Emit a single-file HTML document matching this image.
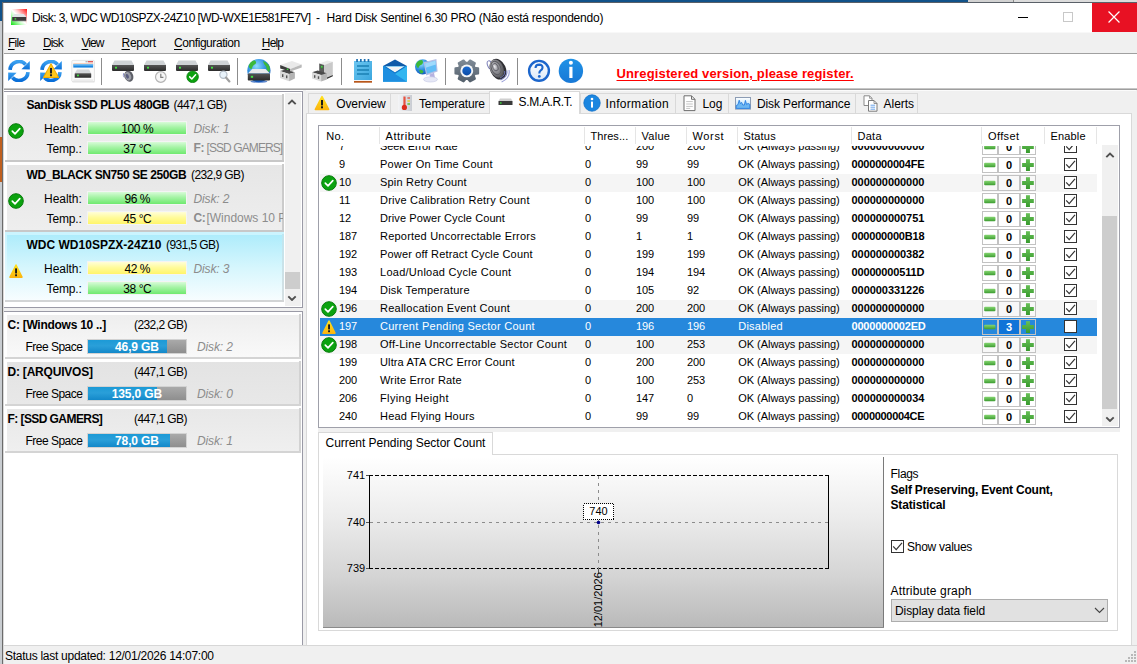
<!DOCTYPE html>
<html><head><meta charset="utf-8"><title>Hard Disk Sentinel</title>
<style>
html,body{margin:0;padding:0;}
body{width:1137px;height:664px;overflow:hidden;position:relative;background:#fff;font-family:"Liberation Sans", sans-serif;}
#root{position:absolute;left:0;top:0;width:1137px;height:664px;overflow:hidden;}
#root div,#root svg,#root span.t{position:absolute;box-sizing:border-box;}
span.t{white-space:pre;line-height:16px;font-size:12px;color:#000;}
u{text-decoration:underline;text-underline-offset:1.5px;text-decoration-thickness:1px;}
</style></head><body><div id="root">
<div style="left:0px;top:0px;width:1137px;height:664px;background:#fff;"></div>
<div style="left:0px;top:0px;width:968px;height:3px;background:#115289;"></div>
<div style="left:968px;top:0px;width:46px;height:3px;background:#d2d2d2;"></div>
<div style="left:1014px;top:0px;width:123px;height:3px;background:#dcdcdc;"></div>
<div style="left:1013px;top:0px;width:1px;height:3px;background:#8a8a8a;"></div>
<div style="left:0px;top:0px;width:3px;height:21px;background:#115289;"></div>
<div style="left:0px;top:21px;width:3px;height:116px;background:#c9cdd1;"></div>
<div style="left:0px;top:137px;width:3px;height:45px;background:#c0601f;"></div>
<div style="left:0px;top:182px;width:3px;height:482px;background:#c9cdd1;"></div>
<div style="left:2px;top:2px;width:1135px;height:1px;background:#5a6068;"></div>
<div style="left:2px;top:2px;width:1px;height:662px;background:#6b6b6b;"></div>
<div style="left:3px;top:3px;width:1px;height:661px;background:#d9d9d9;"></div>
<div style="left:4px;top:3px;width:1133px;height:29px;background:#fff;"></div>
<span class="t" style="left:32.1px;top:9.8px;font-size:12px;letter-spacing:-0.57px;">Disk: 3, WDC WD10SPZX-24Z10 [WD-WXE1E581FE7V]</span>
<span class="t" style="left:316.0px;top:9.8px;font-size:12px;">-</span>
<span class="t" style="left:326.5px;top:9.8px;font-size:12px;letter-spacing:-0.23px;">Hard Disk Sentinel 6.30 PRO (Não está respondendo)</span>
<div style="left:1018px;top:17px;width:10px;height:1px;background:#000;"></div>
<div style="left:1063px;top:12px;width:10px;height:10px;border:1px solid #c8c8c8;"></div>
<div style="left:1092px;top:3px;width:45px;height:29px;background:#e81123;"></div>
<svg style="left:1108px;top:11px;" width="12" height="12" viewBox="0 0 11 11"><path d="M0.5 0.5 L10.5 10.5 M10.5 0.5 L0.5 10.5" stroke="#fff" stroke-width="1.1" fill="none"/></svg>
<div style="left:4px;top:32px;width:1133px;height:21px;background:#f0f0f0;"></div>
<div style="left:4px;top:32px;width:1088px;height:1px;background:#f8f8f8;"></div>
<span class="t" style="left:8.0px;top:34.8px;font-size:12px;letter-spacing:-0.76px;"><u>F</u>ile</span>
<span class="t" style="left:43.0px;top:34.8px;font-size:12px;letter-spacing:-0.89px;"><u>D</u>isk</span>
<span class="t" style="left:81.5px;top:34.8px;font-size:12px;letter-spacing:-1.0px;"><u>V</u>iew</span>
<span class="t" style="left:121.5px;top:34.8px;font-size:12px;letter-spacing:-0.29px;"><u>R</u>eport</span>
<span class="t" style="left:174.0px;top:34.8px;font-size:12px;letter-spacing:-0.43px;"><u>C</u>onfiguration</span>
<span class="t" style="left:261.8px;top:34.8px;font-size:12px;letter-spacing:-0.85px;"><u>H</u>elp</span>
<div style="left:4px;top:53px;width:1133px;height:1px;background:#a0a0a0;"></div>
<div style="left:4px;top:54px;width:1133px;height:34px;background:#fff;"></div>
<div style="left:4px;top:88px;width:1133px;height:1px;background:#c6c6c6;"></div>
<div style="left:4px;top:89px;width:1133px;height:1px;background:#9e9e9e;"></div>
<div style="left:303px;top:90px;width:834px;height:23px;background:#f0f0f0;"></div>
<div style="left:303px;top:90px;width:833px;height:1px;background:#fbfbfb;"></div>
<div style="left:303px;top:90px;width:3px;height:555px;background:#f0f0f0;"></div>
<div style="left:101px;top:58px;width:1px;height:27px;background:#8c8c8c;"></div>
<div style="left:237px;top:58px;width:1px;height:27px;background:#8c8c8c;"></div>
<div style="left:341px;top:58px;width:1px;height:27px;background:#8c8c8c;"></div>
<div style="left:445px;top:58px;width:1px;height:27px;background:#8c8c8c;"></div>
<div style="left:517px;top:58px;width:1px;height:27px;background:#8c8c8c;"></div>
<span class="t" style="left:616.5px;top:65.5px;font-size:13px;font-weight:700;color:#ff0000;letter-spacing:0.14px;text-decoration:underline;text-decoration-thickness:1.4px;text-underline-offset:1.6px;">Unregistered version, please register.</span>
<svg style="left:11px;top:9px;" width="16" height="16" viewBox="0 0 16 16"><defs><linearGradient id="tg" x1="1" y1="0" x2="0" y2="1"><stop offset="0" stop-color="#ff1010"/><stop offset="0.36" stop-color="#ffd0d0"/><stop offset="0.5" stop-color="#fff"/><stop offset="0.64" stop-color="#c8ffc8"/><stop offset="1" stop-color="#10e010"/></linearGradient></defs><rect x="0" y="0" width="16" height="16" fill="url(#tg)"/><path d="M3.4 5 L12.8 5 L15.2 8 L1.2 8 Z" fill="#dfe3e6"/><rect x="1.2" y="8" width="14" height="4" fill="#3c3c3c"/><rect x="1.2" y="11.6" width="14" height="0.7" fill="#8a8a8a"/><rect x="3.6" y="9.2" width="1.6" height="1.4" fill="#3ee03e"/></svg>
<svg style="left:0px;top:0px;" width="0" height="0" viewBox="0 0 0 0"><defs><linearGradient id="bl" x1="0" y1="0" x2="0" y2="1"><stop offset="0" stop-color="#3aa0f0"/><stop offset="1" stop-color="#0a6fd8"/></linearGradient><linearGradient id="hd" x1="0" y1="0" x2="0" y2="1"><stop offset="0" stop-color="#555"/><stop offset="1" stop-color="#2a2a2a"/></linearGradient><radialGradient id="gl" cx="0.4" cy="0.3" r="0.8"><stop offset="0" stop-color="#8fdcff"/><stop offset="0.5" stop-color="#2f8fe0"/><stop offset="1" stop-color="#0b4fb0"/></radialGradient><linearGradient id="wg" x1="0" y1="0" x2="0" y2="1"><stop offset="0" stop-color="#ffe01a"/><stop offset="1" stop-color="#fbb610"/></linearGradient></defs></svg>
<svg style="left:8px;top:60px;" width="22" height="22" viewBox="1.2 1.2 21.6 21.6"><path d="M3.2 11 A8.8 8.8 0 0 1 18.5 5.6" fill="none" stroke="url(#bl)" stroke-width="3.6"/><path d="M22.6 2.2 L22.6 10.6 L14.4 10.2 Z" fill="url(#bl)"/><path d="M20.8 13 A8.8 8.8 0 0 1 5.5 18.4" fill="none" stroke="url(#bl)" stroke-width="3.6"/><path d="M1.4 21.8 L1.4 13.4 L9.6 13.8 Z" fill="url(#bl)"/></svg>
<svg style="left:40px;top:60px;" width="22" height="22" viewBox="1.2 1.2 21.6 21.6"><path d="M3.2 11 A8.8 8.8 0 0 1 18.5 5.6" fill="none" stroke="url(#bl)" stroke-width="3.6"/><path d="M22.6 2.2 L22.6 10.6 L14.4 10.2 Z" fill="url(#bl)"/><path d="M20.8 13 A8.8 8.8 0 0 1 5.5 18.4" fill="none" stroke="url(#bl)" stroke-width="3.6"/><path d="M1.4 21.8 L1.4 13.4 L9.6 13.8 Z" fill="url(#bl)"/><path d="M12 4.8 L19.4 18.4 L4.6 18.4 Z" fill="#ffc81e" stroke="#f3ac00" stroke-width="1" stroke-linejoin="round"/><rect x="11" y="9" width="2" height="5.4" fill="#222"/><rect x="11" y="15.2" width="2" height="1.9" fill="#222"/></svg>
<svg style="left:70px;top:58px;" width="27" height="26" viewBox="70 58 27 26"><rect x="72.2" y="61.2" width="22.6" height="21.4" rx="1.2" fill="#e4e4e4"/><rect x="71.8" y="60.4" width="22.6" height="21.2" rx="1" fill="#fbfbfb" stroke="#dedede" stroke-width="0.8"/><rect x="88" y="61.2" width="5" height="1.1" fill="#d83030"/><rect x="85.5" y="61.4" width="2.2" height="0.8" fill="#888"/><rect x="73.3" y="63.4" width="19.8" height="0.9" fill="#f0b89a"/><rect x="73.3" y="64.3" width="19.8" height="3.3" fill="#1b86e0"/><rect x="73.3" y="64.3" width="19.8" height="1.2" fill="#7cc4f4"/><path d="M77 69.4 H89 L91.2 73.2 H74.7 Z" fill="#d4d7da"/><rect x="74.7" y="73.2" width="16.5" height="4.6" rx="0.6" fill="url(#hd)"/><rect x="77" y="74.6" width="1.9" height="1.7" fill="#42e042"/><rect x="73.3" y="79.6" width="19.8" height="1" fill="#e2e2e2"/></svg>
<svg style="left:111px;top:59px;" width="24" height="24" viewBox="0 0 24 24"><path d="M3.5 1.5 L20.5 1.5 L23 6.0 L1 6.0 Z" fill="#cfd3d6"/><path d="M1 6.0 H23 V11.1 Q23 12.1 22 12.1 H2 Q1 12.1 1 11.1 Z" fill="url(#hd)"/><rect x="4" y="7.8" width="2" height="1.8" fill="#42e042"/><ellipse cx="17.8" cy="17.2" rx="4.4" ry="5.6" fill="#5e6068" transform="rotate(-22 17.8 17.2)"/><ellipse cx="17" cy="17.2" rx="3" ry="4.3" fill="#9c9ea8" transform="rotate(-22 17 17.2)"/><ellipse cx="16.3" cy="17.3" rx="1.5" ry="2.4" fill="#5a5e80" transform="rotate(-22 16.3 17.3)"/><path d="M12.6 14.2 Q11.8 16.5 13.2 18.4" fill="none" stroke="#8c90c8" stroke-width="1"/></svg>
<svg style="left:143px;top:59px;" width="24" height="24" viewBox="0 0 24 24"><path d="M3.5 1.5 L20.5 1.5 L23 6.0 L1 6.0 Z" fill="#cfd3d6"/><path d="M1 6.0 H23 V11.1 Q23 12.1 22 12.1 H2 Q1 12.1 1 11.1 Z" fill="url(#hd)"/><rect x="4" y="7.8" width="2" height="1.8" fill="#42e042"/><circle cx="17.8" cy="18" r="5.3" fill="#f6f6f6" stroke="#b4b4b4" stroke-width="1.2"/><path d="M17.8 14.8 V18.3 H20.4" fill="none" stroke="#808080" stroke-width="1.2"/></svg>
<svg style="left:175px;top:59px;" width="24" height="24" viewBox="0 0 24 24"><path d="M3.5 1.5 L20.5 1.5 L23 6.0 L1 6.0 Z" fill="#cfd3d6"/><path d="M1 6.0 H23 V11.1 Q23 12.1 22 12.1 H2 Q1 12.1 1 11.1 Z" fill="url(#hd)"/><rect x="4" y="7.8" width="2" height="1.8" fill="#42e042"/><circle cx="17.6" cy="17.8" r="5.8" fill="#0ba20f" stroke="#067a0a" stroke-width="0.8"/><path d="M14.7 17.9 L16.8 20 L20.6 15.8" stroke="#fff" stroke-width="1.5" fill="none" stroke-linecap="round" stroke-linejoin="round"/></svg>
<svg style="left:207px;top:59px;" width="24" height="24" viewBox="0 0 24 24"><path d="M3.5 1.5 L20.5 1.5 L23 6.0 L1 6.0 Z" fill="#cfd3d6"/><path d="M1 6.0 H23 V11.1 Q23 12.1 22 12.1 H2 Q1 12.1 1 11.1 Z" fill="url(#hd)"/><rect x="4" y="7.8" width="2" height="1.8" fill="#42e042"/><circle cx="16.4" cy="15.8" r="3.6" fill="#e9f3fb" stroke="#b4bec8" stroke-width="1.2"/><path d="M19 18.6 L22.4 22.4" stroke="#a0a0a0" stroke-width="2.2" stroke-linecap="round"/></svg>
<svg style="left:246px;top:58px;" width="26" height="26" viewBox="246 58 26 26"><circle cx="258.9" cy="70.6" r="11.6" fill="url(#gl)"/><path d="M248.6 66 Q250 61.5 254.5 60.2 Q257 61.5 255.5 64 Q252.5 65 252 68.5 Q250 70.5 248.6 66Z" fill="#3cb83a"/><path d="M263 61 Q267 62 269.5 66.5 Q270.5 70 269 72.5 Q266.5 70 266 66.5 Q263.5 64 263 61Z" fill="#3cb83a"/><ellipse cx="258.9" cy="81.6" rx="8.5" ry="1.1" fill="#1a56b8" opacity="0.7"/><path d="M252.2 68.9 H265.6 L270 73.6 H247.8 Z" fill="#e8eaec"/><rect x="247.8" y="73.4" width="22.2" height="7.2" rx="0.8" fill="url(#hd)"/><rect x="250.8" y="75.8" width="2.3" height="2" fill="#42e042"/></svg>
<svg style="left:279px;top:59px;" width="24" height="24" viewBox="279 59 24 24"><path d="M280 71.1 L285.7 69.6 L294.9 72.3 L289.1 74 Z" fill="#4a4a4a"/><path d="M280 71.1 L289.1 74 L289.1 81.2 L280 78 Z" fill="#d9d9d9"/><path d="M289.1 74 L294.9 72.3 L294.9 78.6 L289.1 81.2 Z" fill="#b4b4b4"/><rect x="282" y="74.2" width="1.4" height="2.8" fill="#555"/><rect x="286" y="75.4" width="1.4" height="2.8" fill="#555"/><path d="M280.2 64.9 L292 61.1 L301.7 64.5 L290.3 68.9 Z" fill="#e9e9e9"/><path d="M280.2 64.9 L290.3 68.9 L290.3 71.6 L280.2 68.4 Z" fill="#3c3c3c"/><path d="M290.3 68.9 L301.7 64.5 L301.7 67.4 L290.3 71.6 Z" fill="#b9b9b9"/><rect x="286.8" y="68.6" width="1.5" height="1.3" fill="#42e042"/></svg>
<svg style="left:311px;top:59px;" width="24" height="24" viewBox="311 59 24 24"><path d="M319.2 63.4 L327.4 60.6 L332.8 61.8 L324.3 64.9 Z" fill="#ececec"/><path d="M319.2 63.4 L324.3 64.9 L324.3 76 L319.2 73.5 Z" fill="#5a5a5a"/><path d="M324.3 64.9 L332.8 61.8 L332.8 75.1 L324.3 78.6 Z" fill="#c9c9c9"/><path d="M326.9 77.6 L332.8 75.1 L332.8 76.3 L326.9 78.9 Z" fill="#333"/><rect x="320.6" y="65.6" width="2.4" height="3" fill="#3a7a3a"/><rect x="321.1" y="66.1" width="1.4" height="1.4" fill="#52e052"/><path d="M312 72.3 L317.7 70.6 L326.9 73.2 L321.1 75.1 Z" fill="#4a4a4a"/><path d="M312 72.3 L321.1 75.1 L321.1 81.6 L312 78.4 Z" fill="#d9d9d9"/><path d="M321.1 75.1 L326.9 73.2 L326.9 79.4 L321.1 81.6 Z" fill="#b4b4b4"/><rect x="314" y="75.2" width="1.4" height="2.6" fill="#555"/><rect x="317.8" y="76.3" width="1.4" height="2.6" fill="#555"/></svg>
<svg style="left:353px;top:58px;" width="21" height="26" viewBox="353 58 21 26"><defs><linearGradient id="np" x1="0" y1="0" x2="1" y2="1"><stop offset="0" stop-color="#6cc6f0"/><stop offset="1" stop-color="#3aa6de"/></linearGradient></defs><rect x="354" y="61" width="18" height="19" fill="url(#np)"/><rect x="354" y="80" width="18" height="1" fill="#f4f4f4"/><rect x="354" y="81" width="18" height="1.7" fill="#b8561a"/><rect x="356.2" y="59" width="1.7" height="3" fill="#1d6fb0"/><rect x="360" y="59" width="1.7" height="3" fill="#1d6fb0"/><rect x="363.8" y="59" width="1.7" height="3" fill="#1d6fb0"/><rect x="367.6" y="59" width="1.7" height="3" fill="#1d6fb0"/><path d="M357 66h12M357 70h12M357 74h12" stroke="#1a80b4" stroke-width="1.5"/></svg>
<svg style="left:382px;top:58px;" width="26" height="25" viewBox="382 58 26 25"><path d="M383 66 L395 59.4 L407 66 Z" fill="#0f5aa8"/><path d="M383 66 H407 V81.7 H383 Z" fill="#28a6ea"/><path d="M385.6 66.6 H404.4 L395 72.6 Z" fill="#f4f4f4"/><path d="M383 66 L407 81.7 H383 Z" fill="#1e8fe0"/><path d="M407 66 L395 73.8 L407 81.7 Z" fill="#32b6f0"/><path d="M383 66 L395 73.8 L407 66 L404.4 66.6 L395 72.6 L385.6 66.6 Z" fill="#1473c8"/></svg>
<svg style="left:414px;top:58px;" width="25" height="26" viewBox="414 58 25 26"><circle cx="422.6" cy="66.8" r="7.6" fill="url(#gl)"/><path d="M416 64 Q418 60 422 60 Q424 62 422 64.5 Q419 65 418.5 68 Q416.5 68 416 64Z M419 70 Q422 69 423.5 71.5 Q423 74 420.5 73.5Z" fill="#3cb83a"/><path d="M423.6 62.2 L436.4 59 L437.6 71.4 L426.2 75.4 Z" fill="#b4bee4"/><path d="M425 63.4 L435.4 60.8 L436.4 70.6 L427 73.8 Z" fill="#62bdf6"/><path d="M425 63.4 L435.4 60.8 L435.8 64.6 L425.6 67.8 Z" fill="#a0dafc"/><path d="M429.5 74.4 L434 72.8 L435 78 L430.5 79 Z" fill="#b6b2e0"/><ellipse cx="430.5" cy="79.4" rx="7" ry="2.6" fill="#e6e8f6" stroke="#c4c8e4" stroke-width="0.6"/></svg>
<svg style="left:453px;top:58px;" width="28" height="26" viewBox="453 58 28 26"><defs><linearGradient id="gg" x1="0" y1="0" x2="0" y2="1"><stop offset="0" stop-color="#7d8995"/><stop offset="1" stop-color="#55616d"/></linearGradient><linearGradient id="gb" x1="0" y1="0" x2="0" y2="1"><stop offset="0" stop-color="#1a6ad0"/><stop offset="1" stop-color="#0c4ca6"/></linearGradient></defs><path d="M478.07 68.34 L478.07 73.46 L474.72 74.01 L473.66 75.72 L474.82 78.69 L470.05 81.26 L467.86 78.84 L465.74 78.84 L463.55 81.26 L458.78 78.69 L459.94 75.72 L458.88 74.01 L455.53 73.46 L455.53 68.34 L458.88 67.79 L459.94 66.08 L458.78 63.11 L463.55 60.54 L465.74 62.96 L467.86 62.96 L470.05 60.54 L474.82 63.11 L473.66 66.08 L474.72 67.79 Z" fill="url(#gg)" stroke="url(#gg)" stroke-width="2.2" stroke-linejoin="round"/><circle cx="466.8" cy="70.9" r="6.4" fill="#f4f6f8"/><circle cx="466.8" cy="70.9" r="4.5" fill="url(#gb)"/></svg>
<svg style="left:486px;top:58px;" width="26" height="26" viewBox="486 58 26 26"><defs><radialGradient id="sp" cx="0.4" cy="0.35" r="0.75"><stop offset="0" stop-color="#c4c4c8"/><stop offset="0.5" stop-color="#85858a"/><stop offset="1" stop-color="#404044"/></radialGradient><radialGradient id="sp2" cx="0.4" cy="0.4" r="0.7"><stop offset="0" stop-color="#ececf0"/><stop offset="1" stop-color="#77777e"/></radialGradient></defs><ellipse cx="489.8" cy="64.8" rx="2.3" ry="4.2" fill="none" stroke="#7a7eb8" stroke-width="1" transform="rotate(-20 489.8 64.8)"/><ellipse cx="498" cy="69.2" rx="7.8" ry="10.8" fill="#2e2e32" transform="rotate(-24 498 69.2)"/><ellipse cx="496.8" cy="68.6" rx="6.6" ry="9.6" fill="url(#sp)" transform="rotate(-24 496.8 68.6)"/><ellipse cx="496" cy="68" rx="4.6" ry="7" fill="none" stroke="#5a5a60" stroke-width="0.9" transform="rotate(-24 496 68)"/><ellipse cx="495.4" cy="67.2" rx="2.6" ry="3.9" fill="url(#sp2)" stroke="#55555c" stroke-width="0.7" transform="rotate(-24 495.4 67.2)"/><path d="M506.8 70.4 Q508.2 76.5 500.6 80" fill="none" stroke="#7e84c4" stroke-width="1.1"/><path d="M509 70 Q510.6 78 501.6 82" fill="none" stroke="#9aa0d8" stroke-width="1.1"/><path d="M504.6 71 Q505.6 75.4 500 78" fill="none" stroke="#6a70b0" stroke-width="1"/></svg>
<svg style="left:527px;top:58px;" width="24" height="26" viewBox="527 58 24 26"><defs><linearGradient id="hg" x1="0" y1="0" x2="0" y2="1"><stop offset="0" stop-color="#ffffff"/><stop offset="1" stop-color="#dbe8f8"/></linearGradient></defs><circle cx="539" cy="70.8" r="9.9" fill="url(#hg)" stroke="#1c66cc" stroke-width="2.4"/><path d="M535.5 68 Q535.6 64.6 539.2 64.6 Q542.7 64.8 542.5 67.8 Q542.3 69.5 540.5 70.6 Q539.3 71.4 539.3 73.4" fill="none" stroke="#1c66cc" stroke-width="2.1"/><circle cx="539.3" cy="76.4" r="1.4" fill="#1c66cc"/></svg>
<svg style="left:558px;top:58px;" width="26" height="26" viewBox="558 58 26 26"><defs><linearGradient id="ig" x1="0" y1="0" x2="0" y2="1"><stop offset="0" stop-color="#1f92e6"/><stop offset="1" stop-color="#1878d6"/></linearGradient></defs><circle cx="570.9" cy="70.9" r="12.2" fill="url(#ig)"/><rect x="569.3" y="66.8" width="3.2" height="11.2" fill="#fff"/><circle cx="570.9" cy="62.8" r="2" fill="#fff"/></svg>
<div style="left:4px;top:91px;width:299px;height:1px;background:#9a9aa6;"></div>
<div style="left:302px;top:91px;width:1px;height:217px;background:#9a9aa6;"></div>
<div style="left:4px;top:307px;width:299px;height:1px;background:#9a9aa6;"></div>
<div style="left:4px;top:308px;width:299px;height:3px;background:#f0f0f0;"></div>
<div style="left:5px;top:93px;width:279px;height:2px;background:#fff;"></div>
<div style="left:7px;top:95px;width:275px;height:65px;background:linear-gradient(#e6e6e6,#eeeeee);"></div>
<div style="left:282px;top:94px;width:2px;height:67px;background:#cbcbcb;"></div>
<div style="left:5px;top:160px;width:279px;height:2px;background:#c8c8c8;"></div>
<span class="t" style="left:26.5px;top:97.3px;font-size:12px;font-weight:700;letter-spacing:-0.42px;">SanDisk SSD PLUS 480GB</span>
<span class="t" style="left:173.5px;top:97.3px;font-size:12px;letter-spacing:-0.59px;">(447,1 GB)</span>
<svg style="left:8px;top:123px;" width="16" height="16" viewBox="0 0 16 16"><circle cx="8" cy="8" r="7.3" fill="#0ba20f" stroke="#067a0a" stroke-width="1"/><path d="M4.3 8.2 L7 10.8 L11.8 5.6" stroke="#fff" stroke-width="1.7" fill="none" stroke-linecap="round" stroke-linejoin="round"/></svg>
<span class="t" style="left:44.0px;top:120.8px;font-size:12px;letter-spacing:-0.03px;">Health:</span>
<span class="t" style="left:46.5px;top:140.8px;font-size:12px;letter-spacing:-0.12px;">Temp.:</span>
<div style="left:87px;top:121px;width:100px;height:14px;border:1px solid #f4f4f4;background:linear-gradient(#d8fbd8 0%,#a4f3a4 45%,#6fe96f 100%);"></div>
<div style="left:87px;top:141px;width:100px;height:14px;border:1px solid #f4f4f4;background:linear-gradient(#d8fbd8 0%,#a4f3a4 45%,#6fe96f 100%);"></div>
<span class="t" style="left:121.3px;top:120.8px;font-size:12px;letter-spacing:-0.4px;">100 %</span>
<span class="t" style="left:123.2px;top:140.8px;font-size:12px;letter-spacing:-0.4px;">37 °C</span>
<span class="t" style="left:193.5px;top:120.8px;font-size:12px;font-style:italic;color:#8c8c8c;letter-spacing:-0.13px;">Disk: 1</span>
<div style="left:190px;top:139px;width:93px;height:18px;overflow:hidden;">
<span class="t" style="left:3.5px;top:1.3px;font-size:12px;font-weight:700;color:#8c8c8c;letter-spacing:-0.4px;">F:</span>
<span class="t" style="left:16.5px;top:1.3px;font-size:12px;color:#8c8c8c;letter-spacing:-0.91px;">[SSD GAMERS]</span>
</div>
<div style="left:5px;top:163px;width:279px;height:2px;background:#fff;"></div>
<div style="left:7px;top:165px;width:275px;height:65px;background:linear-gradient(#e6e6e6,#eeeeee);"></div>
<div style="left:282px;top:164px;width:2px;height:67px;background:#cbcbcb;"></div>
<div style="left:5px;top:230px;width:279px;height:2px;background:#c8c8c8;"></div>
<span class="t" style="left:26.5px;top:167.3px;font-size:12px;font-weight:700;letter-spacing:-0.42px;">WD_BLACK SN750 SE 250GB</span>
<span class="t" style="left:191.0px;top:167.3px;font-size:12px;letter-spacing:-0.59px;">(232,9 GB)</span>
<svg style="left:8px;top:193px;" width="16" height="16" viewBox="0 0 16 16"><circle cx="8" cy="8" r="7.3" fill="#0ba20f" stroke="#067a0a" stroke-width="1"/><path d="M4.3 8.2 L7 10.8 L11.8 5.6" stroke="#fff" stroke-width="1.7" fill="none" stroke-linecap="round" stroke-linejoin="round"/></svg>
<span class="t" style="left:44.0px;top:190.8px;font-size:12px;letter-spacing:-0.03px;">Health:</span>
<span class="t" style="left:46.5px;top:210.8px;font-size:12px;letter-spacing:-0.12px;">Temp.:</span>
<div style="left:87px;top:191px;width:100px;height:14px;border:1px solid #f4f4f4;background:linear-gradient(#d8fbd8 0%,#a4f3a4 45%,#6fe96f 100%);"></div>
<div style="left:87px;top:211px;width:100px;height:14px;border:1px solid #f4f4f4;background:linear-gradient(#fffed8 0%,#fffb9c 45%,#fff56a 100%);"></div>
<span class="t" style="left:124.4px;top:190.8px;font-size:12px;letter-spacing:-0.4px;">96 %</span>
<span class="t" style="left:123.2px;top:210.8px;font-size:12px;letter-spacing:-0.4px;">45 °C</span>
<span class="t" style="left:193.5px;top:190.8px;font-size:12px;font-style:italic;color:#8c8c8c;letter-spacing:-0.13px;">Disk: 2</span>
<div style="left:190px;top:209px;width:93px;height:18px;overflow:hidden;">
<span class="t" style="left:3.5px;top:1.3px;font-size:12px;font-weight:700;color:#8c8c8c;letter-spacing:-0.4px;">C:</span>
<span class="t" style="left:16.5px;top:1.3px;font-size:12px;color:#8c8c8c;letter-spacing:-0.02px;">[Windows 10 Pro]</span>
</div>
<div style="left:5px;top:232px;width:279px;height:3px;background:#cbf4fe;"></div>
<div style="left:5px;top:235px;width:2px;height:65px;background:linear-gradient(#cbf4fe,#f4fcff);"></div>
<div style="left:7px;top:235px;width:275px;height:65px;background:linear-gradient(#aeecfb 0%,#d6f6fd 50%,#f7fdff 100%);"></div>
<div style="left:282px;top:234px;width:2px;height:67px;background:linear-gradient(#bfe6f0,#d6dfe2);"></div>
<div style="left:5px;top:300px;width:279px;height:2px;background:#d2d4d5;"></div>
<span class="t" style="left:26.5px;top:237.3px;font-size:12px;font-weight:700;letter-spacing:0.01px;">WDC WD10SPZX-24Z10</span>
<span class="t" style="left:166.0px;top:237.3px;font-size:12px;letter-spacing:-0.59px;">(931,5 GB)</span>
<svg style="left:8px;top:263px;" width="16" height="16" viewBox="0 0 16 16"><path d="M8 2 L14 14.2 L2 14.2 Z" fill="url(#wg)" stroke="url(#wg)" stroke-width="1.5" stroke-linejoin="round"/><rect x="7.1" y="5.4" width="1.9" height="5" fill="#1a1a1a"/><rect x="7.1" y="11.3" width="1.9" height="1.9" fill="#1a1a1a"/></svg>
<span class="t" style="left:44.0px;top:260.8px;font-size:12px;letter-spacing:-0.03px;">Health:</span>
<span class="t" style="left:46.5px;top:280.8px;font-size:12px;letter-spacing:-0.12px;">Temp.:</span>
<div style="left:87px;top:261px;width:100px;height:14px;border:1px solid #f4f4f4;background:linear-gradient(#fffed8 0%,#fffb9c 45%,#fff56a 100%);"></div>
<div style="left:87px;top:281px;width:100px;height:14px;border:1px solid #f4f4f4;background:linear-gradient(#d8fbd8 0%,#a4f3a4 45%,#6fe96f 100%);"></div>
<span class="t" style="left:124.4px;top:260.8px;font-size:12px;letter-spacing:-0.4px;">42 %</span>
<span class="t" style="left:123.2px;top:280.8px;font-size:12px;letter-spacing:-0.4px;">38 °C</span>
<span class="t" style="left:193.5px;top:260.8px;font-size:12px;font-style:italic;color:#8c8c8c;letter-spacing:-0.13px;">Disk: 3</span>
<div style="left:285px;top:93px;width:16px;height:213px;background:#f0f0f0;"></div>
<svg style="left:287.4px;top:99px;" width="10" height="6.5" viewBox="0 0 10 6.5"><path d="M1.3 5.2 L5 1.5 L8.7 5.2" stroke="#505050" stroke-width="1.9" fill="none"/></svg>
<svg style="left:287.4px;top:294.5px;" width="10" height="6.5" viewBox="0 0 10 6.5"><path d="M1.3 1.3 L5 5 L8.7 1.3" stroke="#505050" stroke-width="1.9" fill="none"/></svg>
<div style="left:285px;top:272px;width:15px;height:17px;background:#cdcdcd;"></div>
<div style="left:4px;top:311px;width:299px;height:1px;background:#9a9aa6;"></div>
<div style="left:302px;top:311px;width:1px;height:335px;background:#9a9aa6;"></div>
<div style="left:7px;top:315px;width:292px;height:42px;background:linear-gradient(#eeeeee,#f9f9f9);"></div>
<div style="left:299px;top:314px;width:2px;height:44px;background:#d2d2d2;"></div>
<div style="left:5px;top:357px;width:296px;height:2px;background:#d4d4d4;"></div>
<span class="t" style="left:7.5px;top:316.8px;font-size:12px;font-weight:700;letter-spacing:-0.27px;">C: [Windows 10 ..]</span>
<span class="t" style="left:134.0px;top:316.8px;font-size:12px;letter-spacing:-0.59px;">(232,2 GB)</span>
<span class="t" style="left:25.5px;top:338.8px;font-size:12px;letter-spacing:-0.52px;">Free Space</span>
<div style="left:87px;top:339px;width:100px;height:15px;border:1px solid #d2d2d2;background:linear-gradient(#a9a9a9,#8e8e8e);"></div>
<div style="left:88px;top:340px;width:79px;height:13px;background:linear-gradient(#1c9ad6 0%,#2a9fd9 45%,#1388c9 100%);"></div>
<span class="t" style="left:115.1px;top:339.3px;font-size:12px;font-weight:700;color:#fff;letter-spacing:-0.15px;">46,9 GB</span>
<span class="t" style="left:197.0px;top:338.8px;font-size:12px;font-style:italic;color:#8c8c8c;letter-spacing:-0.13px;">Disk: 2</span>
<div style="left:7px;top:362px;width:292px;height:42px;background:linear-gradient(#e3e3e3,#e8e8e8);"></div>
<div style="left:299px;top:361px;width:2px;height:44px;background:#d2d2d2;"></div>
<div style="left:5px;top:404px;width:296px;height:2px;background:#d4d4d4;"></div>
<span class="t" style="left:7.5px;top:363.8px;font-size:12px;font-weight:700;letter-spacing:-0.21px;">D: [ARQUIVOS]</span>
<span class="t" style="left:134.0px;top:363.8px;font-size:12px;letter-spacing:-0.59px;">(447,1 GB)</span>
<span class="t" style="left:25.5px;top:385.8px;font-size:12px;letter-spacing:-0.52px;">Free Space</span>
<div style="left:87px;top:386px;width:100px;height:15px;border:1px solid #d2d2d2;background:linear-gradient(#a9a9a9,#8e8e8e);"></div>
<div style="left:88px;top:387px;width:69px;height:13px;background:linear-gradient(#1c9ad6 0%,#2a9fd9 45%,#1388c9 100%);"></div>
<span class="t" style="left:111.8px;top:386.3px;font-size:12px;font-weight:700;color:#fff;letter-spacing:-0.15px;">135,0 GB</span>
<span class="t" style="left:197.0px;top:385.8px;font-size:12px;font-style:italic;color:#8c8c8c;letter-spacing:-0.13px;">Disk: 0</span>
<div style="left:7px;top:409px;width:292px;height:42px;background:linear-gradient(#e8e8e8,#efefef);"></div>
<div style="left:299px;top:408px;width:2px;height:44px;background:#d2d2d2;"></div>
<div style="left:5px;top:451px;width:296px;height:2px;background:#d4d4d4;"></div>
<span class="t" style="left:7.5px;top:410.8px;font-size:12px;font-weight:700;letter-spacing:-0.57px;">F: [SSD GAMERS]</span>
<span class="t" style="left:134.0px;top:410.8px;font-size:12px;letter-spacing:-0.59px;">(447,1 GB)</span>
<span class="t" style="left:25.5px;top:432.8px;font-size:12px;letter-spacing:-0.52px;">Free Space</span>
<div style="left:87px;top:433px;width:100px;height:15px;border:1px solid #d2d2d2;background:linear-gradient(#a9a9a9,#8e8e8e);"></div>
<div style="left:88px;top:434px;width:82px;height:13px;background:linear-gradient(#1c9ad6 0%,#2a9fd9 45%,#1388c9 100%);"></div>
<span class="t" style="left:115.1px;top:433.3px;font-size:12px;font-weight:700;color:#fff;letter-spacing:-0.15px;">78,0 GB</span>
<span class="t" style="left:197.0px;top:432.8px;font-size:12px;font-style:italic;color:#8c8c8c;letter-spacing:-0.13px;">Disk: 1</span>
<div style="left:306px;top:113px;width:826px;height:532px;background:#fff;"></div>
<div style="left:306px;top:113px;width:826px;height:1px;background:#d9d9d9;"></div>
<div style="left:306px;top:113px;width:1px;height:532px;background:#d9d9d9;"></div>
<div style="left:1131px;top:113px;width:1px;height:532px;background:#d9d9d9;"></div>
<div style="left:1132px;top:92px;width:5px;height:553px;background:#f0f0f0;"></div>
<div style="left:308px;top:93px;width:83px;height:20px;background:#f0f0f0;border:1px solid #d9d9d9;border-bottom:none;"></div>
<span class="t" style="left:336.2px;top:95.8px;font-size:12px;letter-spacing:-0.08px;">Overview</span>
<div style="left:390px;top:93px;width:101px;height:20px;background:#f0f0f0;border:1px solid #d9d9d9;border-bottom:none;"></div>
<span class="t" style="left:419.0px;top:95.8px;font-size:12px;letter-spacing:-0.14px;">Temperature</span>
<div style="left:580px;top:93px;width:96px;height:20px;background:#f0f0f0;border:1px solid #d9d9d9;border-bottom:none;"></div>
<span class="t" style="left:605.5px;top:95.8px;font-size:12px;letter-spacing:0.32px;">Information</span>
<div style="left:675px;top:93px;width:54px;height:20px;background:#f0f0f0;border:1px solid #d9d9d9;border-bottom:none;"></div>
<span class="t" style="left:702.5px;top:95.8px;font-size:12px;letter-spacing:-0.08px;">Log</span>
<div style="left:728px;top:93px;width:128px;height:20px;background:#f0f0f0;border:1px solid #d9d9d9;border-bottom:none;"></div>
<span class="t" style="left:757.0px;top:95.8px;font-size:12px;letter-spacing:-0.13px;">Disk Performance</span>
<div style="left:855px;top:93px;width:63px;height:20px;background:#f0f0f0;border:1px solid #d9d9d9;border-bottom:none;"></div>
<span class="t" style="left:883.5px;top:95.8px;font-size:12px;letter-spacing:-0.02px;">Alerts</span>
<div style="left:489px;top:91px;width:91px;height:23px;background:#fff;border:1px solid #d9d9d9;border-bottom:none;"></div>
<span class="t" style="left:518.5px;top:93.8px;font-size:12px;letter-spacing:-0.35px;">S.M.A.R.T.</span>
<svg style="left:314px;top:95px;" width="16" height="16" viewBox="0 0 16 16"><path d="M8 1.6 L14.6 14.4 L1.4 14.4 Z" fill="url(#wg)" stroke="url(#wg)" stroke-width="1.6" stroke-linejoin="round"/><rect x="7" y="5" width="2" height="5.4" fill="#1a1a1a"/><rect x="7" y="11.3" width="2" height="2" fill="#1a1a1a"/></svg>
<svg style="left:398px;top:95px;" width="15" height="16" viewBox="0 0 15 16"><defs><linearGradient id="thb" x1="0" y1="0" x2="1" y2="0"><stop offset="0" stop-color="#f4f5f7"/><stop offset="1" stop-color="#c9ccd2"/></linearGradient></defs><rect x="0" y="0" width="14" height="16" fill="url(#thb)"/><rect x="5.5" y="1.6" width="2" height="10" fill="#e23a28"/><rect x="5.5" y="1.6" width="0.8" height="10" fill="#f08a7a"/><circle cx="6.4" cy="12.4" r="2.6" fill="#dc2c1c"/><rect x="9.4" y="2.2" width="2.6" height="1.6" fill="#e0695a"/><rect x="9.4" y="5.2" width="2.6" height="1.6" fill="#e6cf3e"/><rect x="9.4" y="8.2" width="2.6" height="1.6" fill="#62c242"/></svg>
<svg style="left:498px;top:98px;" width="15" height="8" viewBox="0 0 15 8"><path d="M2 0.5 L13 0.5 L14.5 3 L0.5 3 Z" fill="#d0d0d0"/><rect x="0.5" y="3" width="14" height="4" fill="#3a3a3a"/><rect x="2" y="4.3" width="1.6" height="1.4" fill="#3ddc3d"/></svg>
<svg style="left:583px;top:94px;" width="18" height="18" viewBox="0 0 18 18"><circle cx="9" cy="9" r="8.2" fill="#1b86e0"/><circle cx="9" cy="9" r="8.2" fill="none" stroke="#1371c8" stroke-width="0.8"/><rect x="8" y="7.6" width="2" height="6" fill="#fff"/><circle cx="9" cy="5" r="1.3" fill="#fff"/></svg>
<svg style="left:683px;top:95px;" width="14" height="17" viewBox="0 0 14 17"><path d="M1 0.8 H8.5 L12 4.3 V15.6 H1 Z" fill="#fff" stroke="#6e6e6e" stroke-width="1"/><path d="M8.5 0.8 V4.3 H12" fill="none" stroke="#6e6e6e" stroke-width="1"/><path d="M3.2 6.6h6.6M3.2 9h6.6M3.2 11.4h6.6M3.2 13.4h4" stroke="#c4c4c4" stroke-width="1"/></svg>
<svg style="left:735px;top:97px;" width="16" height="13" viewBox="0 0 16 13"><defs><linearGradient id="dp" x1="0" y1="0" x2="0" y2="1"><stop offset="0" stop-color="#ffffff"/><stop offset="1" stop-color="#a4d6fa"/></linearGradient></defs><rect x="0.5" y="0.5" width="15" height="11.6" fill="url(#dp)" stroke="#8c9cb4" stroke-width="1"/><path d="M1.2 8.6 L3 7.6 L4.2 3.2 L5.4 6.6 L6.6 5.4 L7.8 8 L9.4 8 L10.4 3.4 L11.6 7.6 L13 6.4 L14.8 7.4 V11.4 H1.2 Z" fill="#6cb6f2" stroke="#2a7fe0" stroke-width="0.9" stroke-linejoin="round"/></svg>
<svg style="left:863px;top:95px;" width="16" height="17" viewBox="0 0 16 17"><path d="M1 0.8 H6.5 L9 3.3 V10.5 H1 Z" fill="#fff" stroke="#8a8a8a" stroke-width="1"/><path d="M6.5 0.8 V3.3 H9" fill="none" stroke="#8a8a8a" stroke-width="0.8"/><path d="M5.5 5.5 H11 L14 8.5 V16.2 H5.5 Z" fill="#fff" stroke="#7a7a7a" stroke-width="1"/><path d="M11 5.5 V8.5 H14" fill="none" stroke="#7a7a7a" stroke-width="0.8"/><path d="M7.5 10.2h4.6M7.5 12.2h4.6M7.5 14.2h4.6" stroke="#5a9ae6" stroke-width="0.9"/></svg>
<div style="left:318px;top:125px;width:802px;height:303px;border:1px solid #9fa0aa;background:#fff;"></div>
<div style="left:319px;top:145px;width:800px;height:282px;overflow:hidden;">
<span class="t" style="left:20.0px;top:-6.8px;font-size:11px;letter-spacing:-0.15px;">7</span>
<span class="t" style="left:61.0px;top:-6.8px;font-size:11px;letter-spacing:-0.09px;">Seek Error Rate</span>
<span class="t" style="left:266.0px;top:-6.8px;font-size:11px;letter-spacing:-0.15px;">0</span>
<span class="t" style="left:317.0px;top:-6.8px;font-size:11px;letter-spacing:-0.15px;">200</span>
<span class="t" style="left:368.0px;top:-6.8px;font-size:11px;letter-spacing:-0.15px;">200</span>
<span class="t" style="left:419.2px;top:-6.8px;font-size:11px;letter-spacing:-0.03px;">OK (Always passing)</span>
<span class="t" style="left:532.5px;top:-6.8px;font-size:11px;font-weight:700;letter-spacing:-0.05px;">000000000000</span>
<div style="left:663px;top:-6px;width:16px;height:16px;border:1px solid #c2c2c2;background:rgba(255,255,255,0.35);"></div>
<div style="left:679px;top:-6px;width:22px;height:16px;border:1px solid #c2c2c2;background:rgba(255,255,255,0.35);"></div>
<div style="left:701px;top:-6px;width:16px;height:16px;border:1px solid #c2c2c2;background:rgba(255,255,255,0.35);"></div>
<svg style="left:663px;top:-6px;" width="16" height="16" viewBox="0 0 15 15"><defs><linearGradient id="mg" x1="0" y1="0" x2="0" y2="1"><stop offset="0" stop-color="#86d672"/><stop offset="1" stop-color="#3c9c30"/></linearGradient></defs><rect x="2" y="5.4" width="10.6" height="4.2" rx="1" fill="url(#mg)"/></svg>
<svg style="left:701px;top:-6px;" width="16" height="16" viewBox="0 0 15 15"><path d="M5.6 2h3.7v3.7h3.6v3.7H9.3v3.8H5.6V9.4H2V5.7h3.6Z" fill="url(#mg)"/><path d="M5.6 2h3.7v3.7h3.6v3.7H9.3v3.8H5.6V9.4H2V5.7h3.6Z" fill="#2f9426" opacity="0.35"/></svg>
<span class="t" style="left:686.9px;top:-6.3px;font-size:11px;font-weight:700;">0</span>
<div style="left:745px;top:-5px;width:13px;height:13px;border:1px solid #333;background:#fff;"></div>
<svg style="left:745px;top:-5px;" width="13" height="13" viewBox="0 0 13 13"><path d="M2.2 6.3 L5.2 9.6 L11 2.8" stroke="#333" stroke-width="1.2" fill="none"/></svg>
<span class="t" style="left:20.0px;top:11.2px;font-size:11px;letter-spacing:-0.15px;">9</span>
<span class="t" style="left:61.0px;top:11.2px;font-size:11px;letter-spacing:0.24px;">Power On Time Count</span>
<span class="t" style="left:266.0px;top:11.2px;font-size:11px;letter-spacing:-0.15px;">0</span>
<span class="t" style="left:317.0px;top:11.2px;font-size:11px;letter-spacing:-0.15px;">99</span>
<span class="t" style="left:368.0px;top:11.2px;font-size:11px;letter-spacing:-0.15px;">99</span>
<span class="t" style="left:419.2px;top:11.2px;font-size:11px;letter-spacing:-0.03px;">OK (Always passing)</span>
<span class="t" style="left:532.5px;top:11.2px;font-size:11px;font-weight:700;letter-spacing:-0.2px;">0000000004FE</span>
<div style="left:663px;top:12px;width:16px;height:16px;border:1px solid #c2c2c2;background:rgba(255,255,255,0.35);"></div>
<div style="left:679px;top:12px;width:22px;height:16px;border:1px solid #c2c2c2;background:rgba(255,255,255,0.35);"></div>
<div style="left:701px;top:12px;width:16px;height:16px;border:1px solid #c2c2c2;background:rgba(255,255,255,0.35);"></div>
<svg style="left:663px;top:12px;" width="16" height="16" viewBox="0 0 15 15"><defs><linearGradient id="mg" x1="0" y1="0" x2="0" y2="1"><stop offset="0" stop-color="#86d672"/><stop offset="1" stop-color="#3c9c30"/></linearGradient></defs><rect x="2" y="5.4" width="10.6" height="4.2" rx="1" fill="url(#mg)"/></svg>
<svg style="left:701px;top:12px;" width="16" height="16" viewBox="0 0 15 15"><path d="M5.6 2h3.7v3.7h3.6v3.7H9.3v3.8H5.6V9.4H2V5.7h3.6Z" fill="url(#mg)"/><path d="M5.6 2h3.7v3.7h3.6v3.7H9.3v3.8H5.6V9.4H2V5.7h3.6Z" fill="#2f9426" opacity="0.35"/></svg>
<span class="t" style="left:686.9px;top:11.7px;font-size:11px;font-weight:700;">0</span>
<div style="left:745px;top:13px;width:13px;height:13px;border:1px solid #333;background:#fff;"></div>
<svg style="left:745px;top:13px;" width="13" height="13" viewBox="0 0 13 13"><path d="M2.2 6.3 L5.2 9.6 L11 2.8" stroke="#333" stroke-width="1.2" fill="none"/></svg>
<div style="left:1px;top:29px;width:777px;height:18px;background:#f5f5f5;"></div>
<svg style="left:2px;top:30px;" width="16" height="16" viewBox="0 0 16 16"><circle cx="8" cy="8" r="7.3" fill="#0ba20f" stroke="#067a0a" stroke-width="1"/><path d="M4.3 8.2 L7 10.8 L11.8 5.6" stroke="#fff" stroke-width="1.7" fill="none" stroke-linecap="round" stroke-linejoin="round"/></svg>
<span class="t" style="left:20.0px;top:29.2px;font-size:11px;letter-spacing:-0.15px;">10</span>
<span class="t" style="left:61.0px;top:29.2px;font-size:11px;letter-spacing:0.19px;">Spin Retry Count</span>
<span class="t" style="left:266.0px;top:29.2px;font-size:11px;letter-spacing:-0.15px;">0</span>
<span class="t" style="left:317.0px;top:29.2px;font-size:11px;letter-spacing:-0.15px;">100</span>
<span class="t" style="left:368.0px;top:29.2px;font-size:11px;letter-spacing:-0.15px;">100</span>
<span class="t" style="left:419.2px;top:29.2px;font-size:11px;letter-spacing:-0.03px;">OK (Always passing)</span>
<span class="t" style="left:532.5px;top:29.2px;font-size:11px;font-weight:700;letter-spacing:-0.05px;">000000000000</span>
<div style="left:663px;top:30px;width:16px;height:16px;border:1px solid #c2c2c2;background:rgba(255,255,255,0.35);"></div>
<div style="left:679px;top:30px;width:22px;height:16px;border:1px solid #c2c2c2;background:rgba(255,255,255,0.35);"></div>
<div style="left:701px;top:30px;width:16px;height:16px;border:1px solid #c2c2c2;background:rgba(255,255,255,0.35);"></div>
<svg style="left:663px;top:30px;" width="16" height="16" viewBox="0 0 15 15"><defs><linearGradient id="mg" x1="0" y1="0" x2="0" y2="1"><stop offset="0" stop-color="#86d672"/><stop offset="1" stop-color="#3c9c30"/></linearGradient></defs><rect x="2" y="5.4" width="10.6" height="4.2" rx="1" fill="url(#mg)"/></svg>
<svg style="left:701px;top:30px;" width="16" height="16" viewBox="0 0 15 15"><path d="M5.6 2h3.7v3.7h3.6v3.7H9.3v3.8H5.6V9.4H2V5.7h3.6Z" fill="url(#mg)"/><path d="M5.6 2h3.7v3.7h3.6v3.7H9.3v3.8H5.6V9.4H2V5.7h3.6Z" fill="#2f9426" opacity="0.35"/></svg>
<span class="t" style="left:686.9px;top:29.7px;font-size:11px;font-weight:700;">0</span>
<div style="left:745px;top:31px;width:13px;height:13px;border:1px solid #333;background:#fff;"></div>
<svg style="left:745px;top:31px;" width="13" height="13" viewBox="0 0 13 13"><path d="M2.2 6.3 L5.2 9.6 L11 2.8" stroke="#333" stroke-width="1.2" fill="none"/></svg>
<span class="t" style="left:20.0px;top:47.2px;font-size:11px;letter-spacing:-0.15px;">11</span>
<span class="t" style="left:61.0px;top:47.2px;font-size:11px;letter-spacing:0.23px;">Drive Calibration Retry Count</span>
<span class="t" style="left:266.0px;top:47.2px;font-size:11px;letter-spacing:-0.15px;">0</span>
<span class="t" style="left:317.0px;top:47.2px;font-size:11px;letter-spacing:-0.15px;">100</span>
<span class="t" style="left:368.0px;top:47.2px;font-size:11px;letter-spacing:-0.15px;">100</span>
<span class="t" style="left:419.2px;top:47.2px;font-size:11px;letter-spacing:-0.03px;">OK (Always passing)</span>
<span class="t" style="left:532.5px;top:47.2px;font-size:11px;font-weight:700;letter-spacing:-0.05px;">000000000000</span>
<div style="left:663px;top:48px;width:16px;height:16px;border:1px solid #c2c2c2;background:rgba(255,255,255,0.35);"></div>
<div style="left:679px;top:48px;width:22px;height:16px;border:1px solid #c2c2c2;background:rgba(255,255,255,0.35);"></div>
<div style="left:701px;top:48px;width:16px;height:16px;border:1px solid #c2c2c2;background:rgba(255,255,255,0.35);"></div>
<svg style="left:663px;top:48px;" width="16" height="16" viewBox="0 0 15 15"><defs><linearGradient id="mg" x1="0" y1="0" x2="0" y2="1"><stop offset="0" stop-color="#86d672"/><stop offset="1" stop-color="#3c9c30"/></linearGradient></defs><rect x="2" y="5.4" width="10.6" height="4.2" rx="1" fill="url(#mg)"/></svg>
<svg style="left:701px;top:48px;" width="16" height="16" viewBox="0 0 15 15"><path d="M5.6 2h3.7v3.7h3.6v3.7H9.3v3.8H5.6V9.4H2V5.7h3.6Z" fill="url(#mg)"/><path d="M5.6 2h3.7v3.7h3.6v3.7H9.3v3.8H5.6V9.4H2V5.7h3.6Z" fill="#2f9426" opacity="0.35"/></svg>
<span class="t" style="left:686.9px;top:47.7px;font-size:11px;font-weight:700;">0</span>
<div style="left:745px;top:49px;width:13px;height:13px;border:1px solid #333;background:#fff;"></div>
<svg style="left:745px;top:49px;" width="13" height="13" viewBox="0 0 13 13"><path d="M2.2 6.3 L5.2 9.6 L11 2.8" stroke="#333" stroke-width="1.2" fill="none"/></svg>
<span class="t" style="left:20.0px;top:65.2px;font-size:11px;letter-spacing:-0.15px;">12</span>
<span class="t" style="left:61.0px;top:65.2px;font-size:11px;letter-spacing:0.09px;">Drive Power Cycle Count</span>
<span class="t" style="left:266.0px;top:65.2px;font-size:11px;letter-spacing:-0.15px;">0</span>
<span class="t" style="left:317.0px;top:65.2px;font-size:11px;letter-spacing:-0.15px;">99</span>
<span class="t" style="left:368.0px;top:65.2px;font-size:11px;letter-spacing:-0.15px;">99</span>
<span class="t" style="left:419.2px;top:65.2px;font-size:11px;letter-spacing:-0.03px;">OK (Always passing)</span>
<span class="t" style="left:532.5px;top:65.2px;font-size:11px;font-weight:700;letter-spacing:-0.05px;">000000000751</span>
<div style="left:663px;top:66px;width:16px;height:16px;border:1px solid #c2c2c2;background:rgba(255,255,255,0.35);"></div>
<div style="left:679px;top:66px;width:22px;height:16px;border:1px solid #c2c2c2;background:rgba(255,255,255,0.35);"></div>
<div style="left:701px;top:66px;width:16px;height:16px;border:1px solid #c2c2c2;background:rgba(255,255,255,0.35);"></div>
<svg style="left:663px;top:66px;" width="16" height="16" viewBox="0 0 15 15"><defs><linearGradient id="mg" x1="0" y1="0" x2="0" y2="1"><stop offset="0" stop-color="#86d672"/><stop offset="1" stop-color="#3c9c30"/></linearGradient></defs><rect x="2" y="5.4" width="10.6" height="4.2" rx="1" fill="url(#mg)"/></svg>
<svg style="left:701px;top:66px;" width="16" height="16" viewBox="0 0 15 15"><path d="M5.6 2h3.7v3.7h3.6v3.7H9.3v3.8H5.6V9.4H2V5.7h3.6Z" fill="url(#mg)"/><path d="M5.6 2h3.7v3.7h3.6v3.7H9.3v3.8H5.6V9.4H2V5.7h3.6Z" fill="#2f9426" opacity="0.35"/></svg>
<span class="t" style="left:686.9px;top:65.7px;font-size:11px;font-weight:700;">0</span>
<div style="left:745px;top:67px;width:13px;height:13px;border:1px solid #333;background:#fff;"></div>
<svg style="left:745px;top:67px;" width="13" height="13" viewBox="0 0 13 13"><path d="M2.2 6.3 L5.2 9.6 L11 2.8" stroke="#333" stroke-width="1.2" fill="none"/></svg>
<span class="t" style="left:20.0px;top:83.2px;font-size:11px;letter-spacing:-0.15px;">187</span>
<span class="t" style="left:61.0px;top:83.2px;font-size:11px;letter-spacing:0.21px;">Reported Uncorrectable Errors</span>
<span class="t" style="left:266.0px;top:83.2px;font-size:11px;letter-spacing:-0.15px;">0</span>
<span class="t" style="left:317.0px;top:83.2px;font-size:11px;letter-spacing:-0.15px;">1</span>
<span class="t" style="left:368.0px;top:83.2px;font-size:11px;letter-spacing:-0.15px;">1</span>
<span class="t" style="left:419.2px;top:83.2px;font-size:11px;letter-spacing:-0.03px;">OK (Always passing)</span>
<span class="t" style="left:532.5px;top:83.2px;font-size:11px;font-weight:700;letter-spacing:-0.2px;">000000000B18</span>
<div style="left:663px;top:84px;width:16px;height:16px;border:1px solid #c2c2c2;background:rgba(255,255,255,0.35);"></div>
<div style="left:679px;top:84px;width:22px;height:16px;border:1px solid #c2c2c2;background:rgba(255,255,255,0.35);"></div>
<div style="left:701px;top:84px;width:16px;height:16px;border:1px solid #c2c2c2;background:rgba(255,255,255,0.35);"></div>
<svg style="left:663px;top:84px;" width="16" height="16" viewBox="0 0 15 15"><defs><linearGradient id="mg" x1="0" y1="0" x2="0" y2="1"><stop offset="0" stop-color="#86d672"/><stop offset="1" stop-color="#3c9c30"/></linearGradient></defs><rect x="2" y="5.4" width="10.6" height="4.2" rx="1" fill="url(#mg)"/></svg>
<svg style="left:701px;top:84px;" width="16" height="16" viewBox="0 0 15 15"><path d="M5.6 2h3.7v3.7h3.6v3.7H9.3v3.8H5.6V9.4H2V5.7h3.6Z" fill="url(#mg)"/><path d="M5.6 2h3.7v3.7h3.6v3.7H9.3v3.8H5.6V9.4H2V5.7h3.6Z" fill="#2f9426" opacity="0.35"/></svg>
<span class="t" style="left:686.9px;top:83.7px;font-size:11px;font-weight:700;">0</span>
<div style="left:745px;top:85px;width:13px;height:13px;border:1px solid #333;background:#fff;"></div>
<svg style="left:745px;top:85px;" width="13" height="13" viewBox="0 0 13 13"><path d="M2.2 6.3 L5.2 9.6 L11 2.8" stroke="#333" stroke-width="1.2" fill="none"/></svg>
<span class="t" style="left:20.0px;top:101.2px;font-size:11px;letter-spacing:-0.15px;">192</span>
<span class="t" style="left:61.0px;top:101.2px;font-size:11px;letter-spacing:0.17px;">Power off Retract Cycle Count</span>
<span class="t" style="left:266.0px;top:101.2px;font-size:11px;letter-spacing:-0.15px;">0</span>
<span class="t" style="left:317.0px;top:101.2px;font-size:11px;letter-spacing:-0.15px;">199</span>
<span class="t" style="left:368.0px;top:101.2px;font-size:11px;letter-spacing:-0.15px;">199</span>
<span class="t" style="left:419.2px;top:101.2px;font-size:11px;letter-spacing:-0.03px;">OK (Always passing)</span>
<span class="t" style="left:532.5px;top:101.2px;font-size:11px;font-weight:700;letter-spacing:-0.05px;">000000000382</span>
<div style="left:663px;top:102px;width:16px;height:16px;border:1px solid #c2c2c2;background:rgba(255,255,255,0.35);"></div>
<div style="left:679px;top:102px;width:22px;height:16px;border:1px solid #c2c2c2;background:rgba(255,255,255,0.35);"></div>
<div style="left:701px;top:102px;width:16px;height:16px;border:1px solid #c2c2c2;background:rgba(255,255,255,0.35);"></div>
<svg style="left:663px;top:102px;" width="16" height="16" viewBox="0 0 15 15"><defs><linearGradient id="mg" x1="0" y1="0" x2="0" y2="1"><stop offset="0" stop-color="#86d672"/><stop offset="1" stop-color="#3c9c30"/></linearGradient></defs><rect x="2" y="5.4" width="10.6" height="4.2" rx="1" fill="url(#mg)"/></svg>
<svg style="left:701px;top:102px;" width="16" height="16" viewBox="0 0 15 15"><path d="M5.6 2h3.7v3.7h3.6v3.7H9.3v3.8H5.6V9.4H2V5.7h3.6Z" fill="url(#mg)"/><path d="M5.6 2h3.7v3.7h3.6v3.7H9.3v3.8H5.6V9.4H2V5.7h3.6Z" fill="#2f9426" opacity="0.35"/></svg>
<span class="t" style="left:686.9px;top:101.7px;font-size:11px;font-weight:700;">0</span>
<div style="left:745px;top:103px;width:13px;height:13px;border:1px solid #333;background:#fff;"></div>
<svg style="left:745px;top:103px;" width="13" height="13" viewBox="0 0 13 13"><path d="M2.2 6.3 L5.2 9.6 L11 2.8" stroke="#333" stroke-width="1.2" fill="none"/></svg>
<span class="t" style="left:20.0px;top:119.2px;font-size:11px;letter-spacing:-0.15px;">193</span>
<span class="t" style="left:61.0px;top:119.2px;font-size:11px;letter-spacing:0.26px;">Load/Unload Cycle Count</span>
<span class="t" style="left:266.0px;top:119.2px;font-size:11px;letter-spacing:-0.15px;">0</span>
<span class="t" style="left:317.0px;top:119.2px;font-size:11px;letter-spacing:-0.15px;">194</span>
<span class="t" style="left:368.0px;top:119.2px;font-size:11px;letter-spacing:-0.15px;">194</span>
<span class="t" style="left:419.2px;top:119.2px;font-size:11px;letter-spacing:-0.03px;">OK (Always passing)</span>
<span class="t" style="left:532.5px;top:119.2px;font-size:11px;font-weight:700;letter-spacing:-0.15px;">00000000511D</span>
<div style="left:663px;top:120px;width:16px;height:16px;border:1px solid #c2c2c2;background:rgba(255,255,255,0.35);"></div>
<div style="left:679px;top:120px;width:22px;height:16px;border:1px solid #c2c2c2;background:rgba(255,255,255,0.35);"></div>
<div style="left:701px;top:120px;width:16px;height:16px;border:1px solid #c2c2c2;background:rgba(255,255,255,0.35);"></div>
<svg style="left:663px;top:120px;" width="16" height="16" viewBox="0 0 15 15"><defs><linearGradient id="mg" x1="0" y1="0" x2="0" y2="1"><stop offset="0" stop-color="#86d672"/><stop offset="1" stop-color="#3c9c30"/></linearGradient></defs><rect x="2" y="5.4" width="10.6" height="4.2" rx="1" fill="url(#mg)"/></svg>
<svg style="left:701px;top:120px;" width="16" height="16" viewBox="0 0 15 15"><path d="M5.6 2h3.7v3.7h3.6v3.7H9.3v3.8H5.6V9.4H2V5.7h3.6Z" fill="url(#mg)"/><path d="M5.6 2h3.7v3.7h3.6v3.7H9.3v3.8H5.6V9.4H2V5.7h3.6Z" fill="#2f9426" opacity="0.35"/></svg>
<span class="t" style="left:686.9px;top:119.7px;font-size:11px;font-weight:700;">0</span>
<div style="left:745px;top:121px;width:13px;height:13px;border:1px solid #333;background:#fff;"></div>
<svg style="left:745px;top:121px;" width="13" height="13" viewBox="0 0 13 13"><path d="M2.2 6.3 L5.2 9.6 L11 2.8" stroke="#333" stroke-width="1.2" fill="none"/></svg>
<span class="t" style="left:20.0px;top:137.2px;font-size:11px;letter-spacing:-0.15px;">194</span>
<span class="t" style="left:61.0px;top:137.2px;font-size:11px;letter-spacing:0.24px;">Disk Temperature</span>
<span class="t" style="left:266.0px;top:137.2px;font-size:11px;letter-spacing:-0.15px;">0</span>
<span class="t" style="left:317.0px;top:137.2px;font-size:11px;letter-spacing:-0.15px;">105</span>
<span class="t" style="left:368.0px;top:137.2px;font-size:11px;letter-spacing:-0.15px;">92</span>
<span class="t" style="left:419.2px;top:137.2px;font-size:11px;letter-spacing:-0.03px;">OK (Always passing)</span>
<span class="t" style="left:532.5px;top:137.2px;font-size:11px;font-weight:700;letter-spacing:-0.05px;">000000331226</span>
<div style="left:663px;top:138px;width:16px;height:16px;border:1px solid #c2c2c2;background:rgba(255,255,255,0.35);"></div>
<div style="left:679px;top:138px;width:22px;height:16px;border:1px solid #c2c2c2;background:rgba(255,255,255,0.35);"></div>
<div style="left:701px;top:138px;width:16px;height:16px;border:1px solid #c2c2c2;background:rgba(255,255,255,0.35);"></div>
<svg style="left:663px;top:138px;" width="16" height="16" viewBox="0 0 15 15"><defs><linearGradient id="mg" x1="0" y1="0" x2="0" y2="1"><stop offset="0" stop-color="#86d672"/><stop offset="1" stop-color="#3c9c30"/></linearGradient></defs><rect x="2" y="5.4" width="10.6" height="4.2" rx="1" fill="url(#mg)"/></svg>
<svg style="left:701px;top:138px;" width="16" height="16" viewBox="0 0 15 15"><path d="M5.6 2h3.7v3.7h3.6v3.7H9.3v3.8H5.6V9.4H2V5.7h3.6Z" fill="url(#mg)"/><path d="M5.6 2h3.7v3.7h3.6v3.7H9.3v3.8H5.6V9.4H2V5.7h3.6Z" fill="#2f9426" opacity="0.35"/></svg>
<span class="t" style="left:686.9px;top:137.7px;font-size:11px;font-weight:700;">0</span>
<div style="left:745px;top:139px;width:13px;height:13px;border:1px solid #333;background:#fff;"></div>
<svg style="left:745px;top:139px;" width="13" height="13" viewBox="0 0 13 13"><path d="M2.2 6.3 L5.2 9.6 L11 2.8" stroke="#333" stroke-width="1.2" fill="none"/></svg>
<div style="left:1px;top:155px;width:777px;height:18px;background:#f5f5f5;"></div>
<svg style="left:2px;top:156px;" width="16" height="16" viewBox="0 0 16 16"><circle cx="8" cy="8" r="7.3" fill="#0ba20f" stroke="#067a0a" stroke-width="1"/><path d="M4.3 8.2 L7 10.8 L11.8 5.6" stroke="#fff" stroke-width="1.7" fill="none" stroke-linecap="round" stroke-linejoin="round"/></svg>
<span class="t" style="left:20.0px;top:155.2px;font-size:11px;letter-spacing:-0.15px;">196</span>
<span class="t" style="left:61.0px;top:155.2px;font-size:11px;letter-spacing:0.25px;">Reallocation Event Count</span>
<span class="t" style="left:266.0px;top:155.2px;font-size:11px;letter-spacing:-0.15px;">0</span>
<span class="t" style="left:317.0px;top:155.2px;font-size:11px;letter-spacing:-0.15px;">200</span>
<span class="t" style="left:368.0px;top:155.2px;font-size:11px;letter-spacing:-0.15px;">200</span>
<span class="t" style="left:419.2px;top:155.2px;font-size:11px;letter-spacing:-0.03px;">OK (Always passing)</span>
<span class="t" style="left:532.5px;top:155.2px;font-size:11px;font-weight:700;letter-spacing:-0.05px;">000000000000</span>
<div style="left:663px;top:156px;width:16px;height:16px;border:1px solid #c2c2c2;background:rgba(255,255,255,0.35);"></div>
<div style="left:679px;top:156px;width:22px;height:16px;border:1px solid #c2c2c2;background:rgba(255,255,255,0.35);"></div>
<div style="left:701px;top:156px;width:16px;height:16px;border:1px solid #c2c2c2;background:rgba(255,255,255,0.35);"></div>
<svg style="left:663px;top:156px;" width="16" height="16" viewBox="0 0 15 15"><defs><linearGradient id="mg" x1="0" y1="0" x2="0" y2="1"><stop offset="0" stop-color="#86d672"/><stop offset="1" stop-color="#3c9c30"/></linearGradient></defs><rect x="2" y="5.4" width="10.6" height="4.2" rx="1" fill="url(#mg)"/></svg>
<svg style="left:701px;top:156px;" width="16" height="16" viewBox="0 0 15 15"><path d="M5.6 2h3.7v3.7h3.6v3.7H9.3v3.8H5.6V9.4H2V5.7h3.6Z" fill="url(#mg)"/><path d="M5.6 2h3.7v3.7h3.6v3.7H9.3v3.8H5.6V9.4H2V5.7h3.6Z" fill="#2f9426" opacity="0.35"/></svg>
<span class="t" style="left:686.9px;top:155.7px;font-size:11px;font-weight:700;">0</span>
<div style="left:745px;top:157px;width:13px;height:13px;border:1px solid #333;background:#fff;"></div>
<svg style="left:745px;top:157px;" width="13" height="13" viewBox="0 0 13 13"><path d="M2.2 6.3 L5.2 9.6 L11 2.8" stroke="#333" stroke-width="1.2" fill="none"/></svg>
<div style="left:1px;top:173px;width:777px;height:18px;background:#2688dc;"></div>
<svg style="left:2px;top:174px;" width="16" height="16" viewBox="0 0 16 16"><path d="M8 2 L14 14.2 L2 14.2 Z" fill="url(#wg)" stroke="url(#wg)" stroke-width="1.5" stroke-linejoin="round"/><rect x="7.1" y="5.4" width="1.9" height="5" fill="#1a1a1a"/><rect x="7.1" y="11.3" width="1.9" height="1.9" fill="#1a1a1a"/></svg>
<span class="t" style="left:20.0px;top:173.2px;font-size:11px;color:#fff;letter-spacing:-0.15px;">197</span>
<span class="t" style="left:61.0px;top:173.2px;font-size:11px;color:#fff;letter-spacing:0.27px;">Current Pending Sector Count</span>
<span class="t" style="left:266.0px;top:173.2px;font-size:11px;color:#fff;letter-spacing:-0.15px;">0</span>
<span class="t" style="left:317.0px;top:173.2px;font-size:11px;color:#fff;letter-spacing:-0.15px;">196</span>
<span class="t" style="left:368.0px;top:173.2px;font-size:11px;color:#fff;letter-spacing:-0.15px;">196</span>
<span class="t" style="left:419.2px;top:173.2px;font-size:11px;color:#fff;letter-spacing:0.25px;">Disabled</span>
<span class="t" style="left:532.5px;top:173.2px;font-size:11px;font-weight:700;color:#fff;letter-spacing:-0.2px;">0000000002ED</span>
<div style="left:663px;top:174px;width:16px;height:16px;border:1px solid #c2c2c2;background:#2688dc;"></div>
<div style="left:679px;top:174px;width:22px;height:16px;border:1px solid #c2c2c2;background:#0f74d8;"></div>
<div style="left:701px;top:174px;width:16px;height:16px;border:1px solid #c2c2c2;background:#2688dc;"></div>
<svg style="left:663px;top:174px;" width="16" height="16" viewBox="0 0 15 15"><defs><linearGradient id="mg" x1="0" y1="0" x2="0" y2="1"><stop offset="0" stop-color="#86d672"/><stop offset="1" stop-color="#3c9c30"/></linearGradient></defs><rect x="2" y="5.4" width="10.6" height="4.2" rx="1" fill="url(#mg)"/></svg>
<svg style="left:701px;top:174px;" width="16" height="16" viewBox="0 0 15 15"><path d="M5.6 2h3.7v3.7h3.6v3.7H9.3v3.8H5.6V9.4H2V5.7h3.6Z" fill="url(#mg)"/><path d="M5.6 2h3.7v3.7h3.6v3.7H9.3v3.8H5.6V9.4H2V5.7h3.6Z" fill="#2f9426" opacity="0.35"/></svg>
<span class="t" style="left:686.9px;top:173.7px;font-size:11px;font-weight:700;color:#fff;">3</span>
<div style="left:745px;top:175px;width:13px;height:13px;border:1px solid #333;background:#fff;"></div>
<div style="left:1px;top:191px;width:777px;height:18px;background:#f5f5f5;"></div>
<svg style="left:2px;top:192px;" width="16" height="16" viewBox="0 0 16 16"><circle cx="8" cy="8" r="7.3" fill="#0ba20f" stroke="#067a0a" stroke-width="1"/><path d="M4.3 8.2 L7 10.8 L11.8 5.6" stroke="#fff" stroke-width="1.7" fill="none" stroke-linecap="round" stroke-linejoin="round"/></svg>
<span class="t" style="left:20.0px;top:191.2px;font-size:11px;letter-spacing:-0.15px;">198</span>
<span class="t" style="left:61.0px;top:191.2px;font-size:11px;letter-spacing:0.27px;">Off-Line Uncorrectable Sector Count</span>
<span class="t" style="left:266.0px;top:191.2px;font-size:11px;letter-spacing:-0.15px;">0</span>
<span class="t" style="left:317.0px;top:191.2px;font-size:11px;letter-spacing:-0.15px;">100</span>
<span class="t" style="left:368.0px;top:191.2px;font-size:11px;letter-spacing:-0.15px;">253</span>
<span class="t" style="left:419.2px;top:191.2px;font-size:11px;letter-spacing:-0.03px;">OK (Always passing)</span>
<span class="t" style="left:532.5px;top:191.2px;font-size:11px;font-weight:700;letter-spacing:-0.05px;">000000000000</span>
<div style="left:663px;top:192px;width:16px;height:16px;border:1px solid #c2c2c2;background:rgba(255,255,255,0.35);"></div>
<div style="left:679px;top:192px;width:22px;height:16px;border:1px solid #c2c2c2;background:rgba(255,255,255,0.35);"></div>
<div style="left:701px;top:192px;width:16px;height:16px;border:1px solid #c2c2c2;background:rgba(255,255,255,0.35);"></div>
<svg style="left:663px;top:192px;" width="16" height="16" viewBox="0 0 15 15"><defs><linearGradient id="mg" x1="0" y1="0" x2="0" y2="1"><stop offset="0" stop-color="#86d672"/><stop offset="1" stop-color="#3c9c30"/></linearGradient></defs><rect x="2" y="5.4" width="10.6" height="4.2" rx="1" fill="url(#mg)"/></svg>
<svg style="left:701px;top:192px;" width="16" height="16" viewBox="0 0 15 15"><path d="M5.6 2h3.7v3.7h3.6v3.7H9.3v3.8H5.6V9.4H2V5.7h3.6Z" fill="url(#mg)"/><path d="M5.6 2h3.7v3.7h3.6v3.7H9.3v3.8H5.6V9.4H2V5.7h3.6Z" fill="#2f9426" opacity="0.35"/></svg>
<span class="t" style="left:686.9px;top:191.7px;font-size:11px;font-weight:700;">0</span>
<div style="left:745px;top:193px;width:13px;height:13px;border:1px solid #333;background:#fff;"></div>
<svg style="left:745px;top:193px;" width="13" height="13" viewBox="0 0 13 13"><path d="M2.2 6.3 L5.2 9.6 L11 2.8" stroke="#333" stroke-width="1.2" fill="none"/></svg>
<span class="t" style="left:20.0px;top:209.2px;font-size:11px;letter-spacing:-0.15px;">199</span>
<span class="t" style="left:61.0px;top:209.2px;font-size:11px;letter-spacing:0.12px;">Ultra ATA CRC Error Count</span>
<span class="t" style="left:266.0px;top:209.2px;font-size:11px;letter-spacing:-0.15px;">0</span>
<span class="t" style="left:317.0px;top:209.2px;font-size:11px;letter-spacing:-0.15px;">200</span>
<span class="t" style="left:368.0px;top:209.2px;font-size:11px;letter-spacing:-0.15px;">200</span>
<span class="t" style="left:419.2px;top:209.2px;font-size:11px;letter-spacing:-0.03px;">OK (Always passing)</span>
<span class="t" style="left:532.5px;top:209.2px;font-size:11px;font-weight:700;letter-spacing:-0.05px;">000000000000</span>
<div style="left:663px;top:210px;width:16px;height:16px;border:1px solid #c2c2c2;background:rgba(255,255,255,0.35);"></div>
<div style="left:679px;top:210px;width:22px;height:16px;border:1px solid #c2c2c2;background:rgba(255,255,255,0.35);"></div>
<div style="left:701px;top:210px;width:16px;height:16px;border:1px solid #c2c2c2;background:rgba(255,255,255,0.35);"></div>
<svg style="left:663px;top:210px;" width="16" height="16" viewBox="0 0 15 15"><defs><linearGradient id="mg" x1="0" y1="0" x2="0" y2="1"><stop offset="0" stop-color="#86d672"/><stop offset="1" stop-color="#3c9c30"/></linearGradient></defs><rect x="2" y="5.4" width="10.6" height="4.2" rx="1" fill="url(#mg)"/></svg>
<svg style="left:701px;top:210px;" width="16" height="16" viewBox="0 0 15 15"><path d="M5.6 2h3.7v3.7h3.6v3.7H9.3v3.8H5.6V9.4H2V5.7h3.6Z" fill="url(#mg)"/><path d="M5.6 2h3.7v3.7h3.6v3.7H9.3v3.8H5.6V9.4H2V5.7h3.6Z" fill="#2f9426" opacity="0.35"/></svg>
<span class="t" style="left:686.9px;top:209.7px;font-size:11px;font-weight:700;">0</span>
<div style="left:745px;top:211px;width:13px;height:13px;border:1px solid #333;background:#fff;"></div>
<svg style="left:745px;top:211px;" width="13" height="13" viewBox="0 0 13 13"><path d="M2.2 6.3 L5.2 9.6 L11 2.8" stroke="#333" stroke-width="1.2" fill="none"/></svg>
<span class="t" style="left:20.0px;top:227.2px;font-size:11px;letter-spacing:-0.15px;">200</span>
<span class="t" style="left:61.0px;top:227.2px;font-size:11px;letter-spacing:0.16px;">Write Error Rate</span>
<span class="t" style="left:266.0px;top:227.2px;font-size:11px;letter-spacing:-0.15px;">0</span>
<span class="t" style="left:317.0px;top:227.2px;font-size:11px;letter-spacing:-0.15px;">100</span>
<span class="t" style="left:368.0px;top:227.2px;font-size:11px;letter-spacing:-0.15px;">253</span>
<span class="t" style="left:419.2px;top:227.2px;font-size:11px;letter-spacing:-0.03px;">OK (Always passing)</span>
<span class="t" style="left:532.5px;top:227.2px;font-size:11px;font-weight:700;letter-spacing:-0.05px;">000000000000</span>
<div style="left:663px;top:228px;width:16px;height:16px;border:1px solid #c2c2c2;background:rgba(255,255,255,0.35);"></div>
<div style="left:679px;top:228px;width:22px;height:16px;border:1px solid #c2c2c2;background:rgba(255,255,255,0.35);"></div>
<div style="left:701px;top:228px;width:16px;height:16px;border:1px solid #c2c2c2;background:rgba(255,255,255,0.35);"></div>
<svg style="left:663px;top:228px;" width="16" height="16" viewBox="0 0 15 15"><defs><linearGradient id="mg" x1="0" y1="0" x2="0" y2="1"><stop offset="0" stop-color="#86d672"/><stop offset="1" stop-color="#3c9c30"/></linearGradient></defs><rect x="2" y="5.4" width="10.6" height="4.2" rx="1" fill="url(#mg)"/></svg>
<svg style="left:701px;top:228px;" width="16" height="16" viewBox="0 0 15 15"><path d="M5.6 2h3.7v3.7h3.6v3.7H9.3v3.8H5.6V9.4H2V5.7h3.6Z" fill="url(#mg)"/><path d="M5.6 2h3.7v3.7h3.6v3.7H9.3v3.8H5.6V9.4H2V5.7h3.6Z" fill="#2f9426" opacity="0.35"/></svg>
<span class="t" style="left:686.9px;top:227.7px;font-size:11px;font-weight:700;">0</span>
<div style="left:745px;top:229px;width:13px;height:13px;border:1px solid #333;background:#fff;"></div>
<svg style="left:745px;top:229px;" width="13" height="13" viewBox="0 0 13 13"><path d="M2.2 6.3 L5.2 9.6 L11 2.8" stroke="#333" stroke-width="1.2" fill="none"/></svg>
<span class="t" style="left:20.0px;top:245.2px;font-size:11px;letter-spacing:-0.15px;">206</span>
<span class="t" style="left:61.0px;top:245.2px;font-size:11px;letter-spacing:0.37px;">Flying Height</span>
<span class="t" style="left:266.0px;top:245.2px;font-size:11px;letter-spacing:-0.15px;">0</span>
<span class="t" style="left:317.0px;top:245.2px;font-size:11px;letter-spacing:-0.15px;">147</span>
<span class="t" style="left:368.0px;top:245.2px;font-size:11px;letter-spacing:-0.15px;">0</span>
<span class="t" style="left:419.2px;top:245.2px;font-size:11px;letter-spacing:-0.03px;">OK (Always passing)</span>
<span class="t" style="left:532.5px;top:245.2px;font-size:11px;font-weight:700;letter-spacing:-0.05px;">000000000034</span>
<div style="left:663px;top:246px;width:16px;height:16px;border:1px solid #c2c2c2;background:rgba(255,255,255,0.35);"></div>
<div style="left:679px;top:246px;width:22px;height:16px;border:1px solid #c2c2c2;background:rgba(255,255,255,0.35);"></div>
<div style="left:701px;top:246px;width:16px;height:16px;border:1px solid #c2c2c2;background:rgba(255,255,255,0.35);"></div>
<svg style="left:663px;top:246px;" width="16" height="16" viewBox="0 0 15 15"><defs><linearGradient id="mg" x1="0" y1="0" x2="0" y2="1"><stop offset="0" stop-color="#86d672"/><stop offset="1" stop-color="#3c9c30"/></linearGradient></defs><rect x="2" y="5.4" width="10.6" height="4.2" rx="1" fill="url(#mg)"/></svg>
<svg style="left:701px;top:246px;" width="16" height="16" viewBox="0 0 15 15"><path d="M5.6 2h3.7v3.7h3.6v3.7H9.3v3.8H5.6V9.4H2V5.7h3.6Z" fill="url(#mg)"/><path d="M5.6 2h3.7v3.7h3.6v3.7H9.3v3.8H5.6V9.4H2V5.7h3.6Z" fill="#2f9426" opacity="0.35"/></svg>
<span class="t" style="left:686.9px;top:245.7px;font-size:11px;font-weight:700;">0</span>
<div style="left:745px;top:247px;width:13px;height:13px;border:1px solid #333;background:#fff;"></div>
<svg style="left:745px;top:247px;" width="13" height="13" viewBox="0 0 13 13"><path d="M2.2 6.3 L5.2 9.6 L11 2.8" stroke="#333" stroke-width="1.2" fill="none"/></svg>
<span class="t" style="left:20.0px;top:263.2px;font-size:11px;letter-spacing:-0.15px;">240</span>
<span class="t" style="left:61.0px;top:263.2px;font-size:11px;letter-spacing:0.22px;">Head Flying Hours</span>
<span class="t" style="left:266.0px;top:263.2px;font-size:11px;letter-spacing:-0.15px;">0</span>
<span class="t" style="left:317.0px;top:263.2px;font-size:11px;letter-spacing:-0.15px;">99</span>
<span class="t" style="left:368.0px;top:263.2px;font-size:11px;letter-spacing:-0.15px;">99</span>
<span class="t" style="left:419.2px;top:263.2px;font-size:11px;letter-spacing:-0.03px;">OK (Always passing)</span>
<span class="t" style="left:532.5px;top:263.2px;font-size:11px;font-weight:700;letter-spacing:-0.31px;">0000000004CE</span>
<div style="left:663px;top:264px;width:16px;height:16px;border:1px solid #c2c2c2;background:rgba(255,255,255,0.35);"></div>
<div style="left:679px;top:264px;width:22px;height:16px;border:1px solid #c2c2c2;background:rgba(255,255,255,0.35);"></div>
<div style="left:701px;top:264px;width:16px;height:16px;border:1px solid #c2c2c2;background:rgba(255,255,255,0.35);"></div>
<svg style="left:663px;top:264px;" width="16" height="16" viewBox="0 0 15 15"><defs><linearGradient id="mg" x1="0" y1="0" x2="0" y2="1"><stop offset="0" stop-color="#86d672"/><stop offset="1" stop-color="#3c9c30"/></linearGradient></defs><rect x="2" y="5.4" width="10.6" height="4.2" rx="1" fill="url(#mg)"/></svg>
<svg style="left:701px;top:264px;" width="16" height="16" viewBox="0 0 15 15"><path d="M5.6 2h3.7v3.7h3.6v3.7H9.3v3.8H5.6V9.4H2V5.7h3.6Z" fill="url(#mg)"/><path d="M5.6 2h3.7v3.7h3.6v3.7H9.3v3.8H5.6V9.4H2V5.7h3.6Z" fill="#2f9426" opacity="0.35"/></svg>
<span class="t" style="left:686.9px;top:263.7px;font-size:11px;font-weight:700;">0</span>
<div style="left:745px;top:265px;width:13px;height:13px;border:1px solid #333;background:#fff;"></div>
<svg style="left:745px;top:265px;" width="13" height="13" viewBox="0 0 13 13"><path d="M2.2 6.3 L5.2 9.6 L11 2.8" stroke="#333" stroke-width="1.2" fill="none"/></svg>
</div>
<div style="left:319px;top:126px;width:800px;height:20px;background:#fff;"></div>
<div style="left:379px;top:127px;width:1px;height:17px;background:#e5e5e5;"></div>
<div style="left:584px;top:127px;width:1px;height:17px;background:#e5e5e5;"></div>
<div style="left:635px;top:127px;width:1px;height:17px;background:#e5e5e5;"></div>
<div style="left:686px;top:127px;width:1px;height:17px;background:#e5e5e5;"></div>
<div style="left:737px;top:127px;width:1px;height:17px;background:#e5e5e5;"></div>
<div style="left:851px;top:127px;width:1px;height:17px;background:#e5e5e5;"></div>
<div style="left:981px;top:127px;width:1px;height:17px;background:#e5e5e5;"></div>
<div style="left:1044px;top:127px;width:1px;height:17px;background:#e5e5e5;"></div>
<div style="left:1096px;top:127px;width:1px;height:17px;background:#e5e5e5;"></div>
<span class="t" style="left:326.2px;top:128.2px;font-size:11px;letter-spacing:0.39px;">No.</span>
<span class="t" style="left:385.5px;top:128.2px;font-size:11px;letter-spacing:0.54px;">Attribute</span>
<span class="t" style="left:590.5px;top:128.2px;font-size:11px;letter-spacing:0.06px;">Thres...</span>
<span class="t" style="left:641.5px;top:128.2px;font-size:11px;letter-spacing:0.29px;">Value</span>
<span class="t" style="left:692.5px;top:128.2px;font-size:11px;letter-spacing:0.65px;">Worst</span>
<span class="t" style="left:743.5px;top:128.2px;font-size:11px;letter-spacing:0.19px;">Status</span>
<span class="t" style="left:857.5px;top:128.2px;font-size:11px;letter-spacing:0.26px;">Data</span>
<span class="t" style="left:988.0px;top:128.2px;font-size:11px;letter-spacing:0.36px;">Offset</span>
<span class="t" style="left:1050.5px;top:128.2px;font-size:11px;letter-spacing:0.17px;">Enable</span>
<div style="left:1102px;top:145px;width:16px;height:281px;background:#f0f0f0;"></div>
<div style="left:1102px;top:216px;width:15px;height:193px;background:#cdcdcd;"></div>
<svg style="left:1104.5px;top:151.5px;" width="10" height="6.5" viewBox="0 0 10 6.5"><path d="M1.3 5.2 L5 1.5 L8.7 5.2" stroke="#505050" stroke-width="1.9" fill="none"/></svg>
<svg style="left:1104.5px;top:415.5px;" width="10" height="6.5" viewBox="0 0 10 6.5"><path d="M1.3 1.3 L5 5 L8.7 1.3" stroke="#505050" stroke-width="1.9" fill="none"/></svg>
<div style="left:318px;top:428px;width:802px;height:4px;background:#f0f0f0;"></div>
<div style="left:318px;top:454px;width:800px;height:1px;background:#d9d9d9;"></div>
<div style="left:318px;top:454px;width:1px;height:177px;background:#d9d9d9;"></div>
<div style="left:1117px;top:454px;width:1px;height:177px;background:#d9d9d9;"></div>
<div style="left:318px;top:630px;width:800px;height:1px;background:#d9d9d9;"></div>
<div style="left:318px;top:432px;width:175px;height:23px;background:#fff;border:1px solid #d9d9d9;border-bottom:none;"></div>
<span class="t" style="left:325.5px;top:435.3px;font-size:12px;letter-spacing:-0.03px;">Current Pending Sector Count</span>
<div style="left:323px;top:457px;width:561px;height:171px;background:linear-gradient(#ffffff 0%,#ececec 35%,#d4d4d4 70%,#b9b9b9 100%);"></div>
<div style="left:883px;top:457px;width:1px;height:171px;background:#7a7a7a;"></div>
<div style="left:323px;top:627px;width:561px;height:1px;background:#8a8a8a;"></div>
<svg style="left:323px;top:457px;" width="561" height="171" viewBox="0 0 561 171"><line x1="46.5" y1="18" x2="46.5" y2="111.5" stroke="#000" stroke-width="1"/><line x1="505.5" y1="18" x2="505.5" y2="111.5" stroke="#000" stroke-width="1"/><line x1="46" y1="18.5" x2="506" y2="18.5" stroke="#000" stroke-width="1" stroke-dasharray="4 2"/><line x1="46" y1="111.5" x2="506" y2="111.5" stroke="#000" stroke-width="1" stroke-dasharray="4 2"/><line x1="47" y1="65.5" x2="505" y2="65.5" stroke="#8c8c8c" stroke-width="1" stroke-dasharray="3 4"/><line x1="275.5" y1="19" x2="275.5" y2="112" stroke="#8c8c8c" stroke-width="1" stroke-dasharray="3 4"/><line x1="43" y1="18.5" x2="46" y2="18.5" stroke="#555" stroke-width="1"/><line x1="43" y1="65.5" x2="46" y2="65.5" stroke="#555" stroke-width="1"/><line x1="43" y1="111.5" x2="46" y2="111.5" stroke="#555" stroke-width="1"/><line x1="275.5" y1="112" x2="275.5" y2="116" stroke="#555" stroke-width="1"/><rect x="260.5" y="46.5" width="30" height="16" fill="#fff" stroke="#000" stroke-width="1" stroke-dasharray="1 1" shape-rendering="crispEdges"/><circle cx="275.5" cy="65.5" r="1.8" fill="#00008b"/><text x="275.5" y="57.8" font-size="11" text-anchor="middle" style="font-family:'Liberation Sans',sans-serif" fill="#000">740</text><text x="42.2" y="22.2" font-size="11" text-anchor="end" style="font-family:'Liberation Sans',sans-serif" fill="#000">741</text><text x="42.2" y="69.2" font-size="11" text-anchor="end" style="font-family:'Liberation Sans',sans-serif" fill="#000">740</text><text x="42.2" y="115.2" font-size="11" text-anchor="end" style="font-family:'Liberation Sans',sans-serif" fill="#000">739</text><text transform="translate(279.3,170.3) rotate(-90)" font-size="11" style="font-family:'Liberation Sans',sans-serif" fill="#000">12/01/2026</text></svg>
<span class="t" style="left:890.5px;top:466.3px;font-size:12px;letter-spacing:-0.31px;">Flags</span>
<span class="t" style="left:890.5px;top:481.6px;font-size:12px;font-weight:700;letter-spacing:-0.2px;">Self Preserving, Event Count,</span>
<span class="t" style="left:890.5px;top:496.6px;font-size:12px;font-weight:700;letter-spacing:-0.17px;">Statistical</span>
<div style="left:891px;top:540px;width:13px;height:13px;border:1px solid #333;background:#fff;"></div>
<svg style="left:891px;top:540px;" width="13" height="13" viewBox="0 0 13 13"><path d="M2.2 6.3 L5.2 9.6 L11 2.8" stroke="#333" stroke-width="1.2" fill="none"/></svg>
<span class="t" style="left:907.0px;top:539.1px;font-size:12px;letter-spacing:-0.27px;">Show values</span>
<span class="t" style="left:890.5px;top:582.9px;font-size:12px;letter-spacing:0.16px;">Attribute graph</span>
<div style="left:891px;top:599px;width:217px;height:23px;border:1px solid #adadad;background:#e1e1e1;"></div>
<span class="t" style="left:895.0px;top:602.8px;font-size:12px;letter-spacing:-0.07px;">Display data field</span>
<svg style="left:1094px;top:607px;" width="11" height="7" viewBox="0 0 11 7"><path d="M1 1 L5.5 5.5 L10 1" stroke="#444" stroke-width="1.1" fill="none"/></svg>
<div style="left:4px;top:645px;width:1133px;height:1px;background:#d7d7d7;"></div>
<div style="left:4px;top:646px;width:1133px;height:18px;background:#f0f0f0;"></div>
<span class="t" style="left:5.0px;top:647.8px;font-size:12px;letter-spacing:-0.27px;">Status last updated: 12/01/2026 14:07:00</span>
<div style="left:1134px;top:651px;width:2px;height:2px;background:#b8b8b8;"></div>
<div style="left:1131px;top:654px;width:2px;height:2px;background:#b8b8b8;"></div>
<div style="left:1134px;top:654px;width:2px;height:2px;background:#b8b8b8;"></div>
<div style="left:1128px;top:657px;width:2px;height:2px;background:#b8b8b8;"></div>
<div style="left:1131px;top:657px;width:2px;height:2px;background:#b8b8b8;"></div>
<div style="left:1134px;top:657px;width:2px;height:2px;background:#b8b8b8;"></div>
<div style="left:1125px;top:660px;width:2px;height:2px;background:#b8b8b8;"></div>
<div style="left:1128px;top:660px;width:2px;height:2px;background:#b8b8b8;"></div>
<div style="left:1131px;top:660px;width:2px;height:2px;background:#b8b8b8;"></div>
<div style="left:1134px;top:660px;width:2px;height:2px;background:#b8b8b8;"></div>
</div></body></html>
